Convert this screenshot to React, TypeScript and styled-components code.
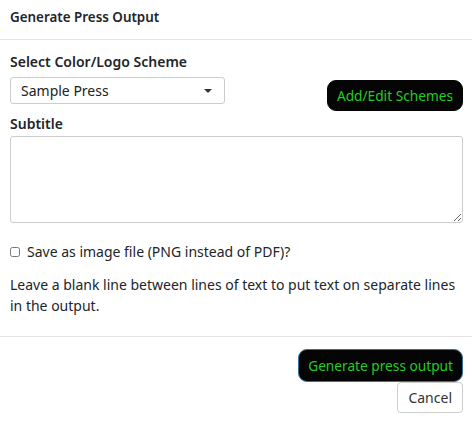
import React from 'react';
import styled, { createGlobalStyle } from 'styled-components';

const GlobalStyle = createGlobalStyle`
  body {
    margin: 0;
    background: #ffffff;
    font-family: 'Noto Sans', 'Liberation Sans', sans-serif;
    color: #212529;
  }
`

const Dialog = styled.div`
  width: 472px;
  height: 421px;
  background: #ffffff;
`

const Header = styled.div`
  height: 40px;
  padding: 0 10px 6px;
  display: flex;
  align-items: center;
  border-bottom: 1px solid #e3e3e3;
  box-sizing: border-box;
`

const Title = styled.span`
  font-size: 13.4px;
  font-weight: 600;
`

const Body = styled.div`
  padding: 12px 9px 0 10px;
  border-bottom: 1px solid #e3e3e3;
  height: 297px;
  box-sizing: border-box;
`

const Label = styled.div`
  font-size: 14px;
  font-weight: 600;
  line-height: 20px;
`

const SchemeRow = styled.div`
  display: flex;
  justify-content: space-between;
  align-items: flex-start;
  margin-top: 5px;
  margin-bottom: 3px;
`

const Select = styled.div`
  width: 215px;
  height: 27px;
  box-sizing: border-box;
  border: 1px solid #cccccc;
  border-radius: 3px;
  display: flex;
  align-items: center;
  justify-content: space-between;
  padding: 0 12px 0 10px;
  font-size: 14px;
  color: #222;
`

const Caret = styled.span`
  width: 0;
  height: 0;
  border-left: 4px solid transparent;
  border-right: 4px solid transparent;
  border-top: 4px solid #333;
`

const DarkButton = styled.button<{ $focused?: boolean }>`
  background: #050505;
  color: #22cc22;
  border: 1px solid ${p => (p.$focused ? '#3a6f9a' : '#050505')};
  border-radius: 9px;
  font-family: 'Noto Sans', 'Liberation Sans', sans-serif;
  font-size: 13.7px;
  padding: 0 9px;
  height: ${p => (p.$focused ? '33px' : '31px')};
  cursor: pointer;
`

const SchemeButton = styled(DarkButton)`
  margin-top: 3px;
`

const TextArea = styled.textarea`
  display: block;
  width: 453px;
  height: 87px;
  margin-top: 2px;
  box-sizing: border-box;
  border: 1px solid #cccccc;
  border-radius: 3px;
  resize: vertical;
`

const CheckRow = styled.label`
  display: flex;
  align-items: center;
  gap: 7px;
  margin-top: 19px;
  font-size: 14px;
  line-height: 20px;
`

const Check = styled.input`
  margin: 0;
  width: 10px;
  height: 10px;
`

const Hint = styled.p`
  margin: 12px 0 0;
  font-size: 14px;
  line-height: 21px;
`

const Footer = styled.div`
  padding: 12px 9px 0 10px;
  display: flex;
  flex-direction: column;
  align-items: flex-end;
`

const CancelButton = styled.button`
  background: #ffffff;
  color: #333;
  border: 1px solid #cccccc;
  border-radius: 4px;
  font-family: 'Noto Sans', 'Liberation Sans', sans-serif;
  font-size: 14px;
  height: 31px;
  padding: 0 10px;
`

function App() {
  return (
    <>
      <GlobalStyle />
      <Dialog>
        <Header>
          <Title>Generate Press Output</Title>
        </Header>
        <Body>
          <Label>Select Color/Logo Scheme</Label>
          <SchemeRow>
            <Select>
              <span>Sample Press</span>
              <Caret />
            </Select>
            <SchemeButton>Add/Edit Schemes</SchemeButton>
          </SchemeRow>
          <Label>Subtitle</Label>
          <TextArea />
          <CheckRow>
            <Check type="checkbox" />
            Save as image file (PNG instead of PDF)?
          </CheckRow>
          <Hint>
            Leave a blank line between lines of text to put text on separate lines in the output.
          </Hint>
        </Body>
        <Footer>
          <DarkButton $focused>Generate press output</DarkButton>
          <CancelButton>Cancel</CancelButton>
        </Footer>
      </Dialog>
    </>
  );
}

export default App;
